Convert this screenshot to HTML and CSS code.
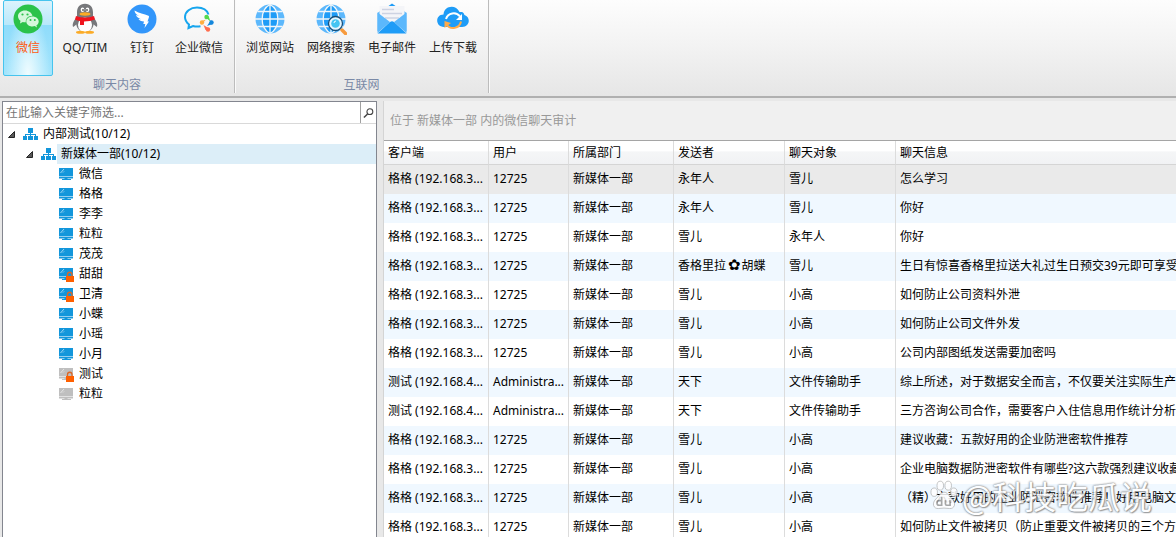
FILE: index.html
```html
<!DOCTYPE html>
<html lang="zh-CN">
<head>
<meta charset="utf-8">
<title>微信聊天审计</title>
<link rel="stylesheet" href="styles.css">
</head>
<body>
<svg class="defs" aria-hidden="true">
  <defs>
    <g id="globe">
      <circle cx="16" cy="16" r="14.5" fill="#5cb8fc"/>
      <path d="M16 1.500C5 7 5 25 16 30.500C27 25 27 7 16 1.500Z" fill="#1e9cf7"/>
      <path d="M16 1V31M1 16H31M3.500 8.500H28.500M3.500 23.500H28.500M16 1.500C5.500 7 5.500 25 16 30.500C26.500 25 26.500 7 16 1.500Z" fill="none" stroke="#f2f6f9" stroke-width="1.300"/>
    </g>
    <g id="org">
      <rect x="5" y="1" width="5" height="5"/>
      <path d="M7 5h1v2h5v3h-1V8H8v2H7V8H3v2H2V7h5z"/>
      <rect x="0" y="9" width="4" height="4"/><rect x="5" y="9" width="5" height="4"/><rect x="11" y="9" width="4" height="4"/>
    </g>
    <g id="pc">
      <path d="M0 1h14v8H0zM0 10h14v1.500H8.500V12H12v1H3v-1h2.500v-.5H0z"/>
      <path d="M0 9h14v1H0z" fill-opacity=".45"/>
      <path d="M1.500 6L5 2M4 5.500L5 4.500" stroke="#fff" stroke-opacity=".6" fill="none"/>
    </g>
    <g id="lock">
      <path d="M8.500 9.500V7.500a2.200 2.200 0 0 1 4.500 0V9.500" fill="none" stroke="#d9682a" stroke-width="1.300"/>
      <rect x="7" y="9" width="8" height="6" fill="#ff6000"/>
    </g>
    <path id="arrow" d="M6.500 1.500V7.500H.5Z" fill="#595959" stroke="#262626"/>
  </defs>
</svg>

<header class="ribbon">
  <section class="group group-chat">
    <div class="tools">
      <button class="tool active" type="button">
        <svg viewBox="0 0 32 32"><circle cx="16" cy="16" r="14.500" fill="#2bc24a"/><path d="M13 7.500C9 7.500 6 10 6 13.300c0 1.900 1 3.500 2.500 4.500L8 20.500l2.800-1.500c1 .3 2 .4 3 .3C13.300 15.500 16.500 12.700 20.500 12.800 19.700 9.800 16.700 7.500 13 7.500Z" fill="#d5f7dc"/><path d="M20.500 13.500c-3.500 0-6.200 2.200-6.200 4.900 0 2.800 2.700 5 6.200 5 .8 0 1.500-.1 2.200-.3L25 24.500l-.6-2.200c1.400-.9 2.300-2.300 2.300-3.900 0-2.700-2.700-4.900-6.200-4.900Z" fill="#d5f7dc"/><g fill="#2bc24a"><circle cx="10.500" cy="11.500" r="1.100"/><circle cx="15.500" cy="11.500" r="1.100"/><circle cx="18.500" cy="17" r="1"/><circle cx="22.800" cy="17" r="1"/></g></svg>
        <span>微信</span>
      </button>
      <button class="tool" type="button">
        <svg viewBox="0 0 32 32"><path d="M8 14C4 18 3 22 4.200 24L8 21M24 14c4 4 5 8 3.800 10L24 21" fill="#77787b"/><path d="M16 .800C10.500.800 8 4.500 8 9.500v4C6 18 6.500 29 16 29S26 18 24 13.500v-4C24 4.500 21.500.800 16 .800Z" fill="#77787b"/><ellipse cx="16" cy="22" rx="7" ry="7.500" fill="#fff"/><ellipse cx="11.500" cy="29.300" rx="4.500" ry="1.500" fill="#fbab26"/><ellipse cx="20.500" cy="29.300" rx="4.500" ry="1.500" fill="#fbab26"/><ellipse cx="13.500" cy="6.800" rx="1.800" ry="2.300" fill="#fff"/><ellipse cx="18.500" cy="6.800" rx="1.800" ry="2.300" fill="#fff"/><circle cx="14" cy="7" r=".9" fill="#555"/><circle cx="18" cy="7" r=".9" fill="#555"/><ellipse cx="16" cy="11" rx="5.500" ry="1.700" fill="#fbab26"/><path d="M7 13q9 3 18 0l1 3.500q-5 2-11 2V22h-4v-4Q8 17.500 6 16.500Z" fill="#f0141e"/></svg>
        <span>QQ/TIM</span>
      </button>
      <button class="tool" type="button">
        <svg viewBox="0 0 32 32"><circle cx="16" cy="16" r="14.500" fill="#3296fa"/><path d="M8.500 7.500C13 10 18 11 22.500 12.800c.8.400.6 1.300.2 2.200L21.500 18.500h1.500L18.500 25l.8-4h-2l.7-2.500c-3-.2-4.500-1-5.500-2.500l2.500.2C12 15 10.500 13.800 10 12l3 .8C10 11.500 8.600 9.800 8.500 7.500Z" fill="#fff"/></svg>
        <span>钉钉</span>
      </button>
      <button class="tool" type="button">
        <svg viewBox="0 0 32 32"><path d="M25.500 11.500C24 7 19.500 4.500 14 4.500 7.500 4.500 2 8.500 2 14c0 3.200 1.500 5.500 4 7.500L5.500 25l4.500-2c2.700.7 5 .7 7.500.2" fill="none" stroke="#16a5ee" stroke-width="2"/><g fill="#54d94d"><circle cx="23.500" cy="14" r="2.200"/><path d="M22 14l3.500-1 2 5.500z"/></g><g fill="#1587dc"><circle cx="28.500" cy="19.500" r="2.200"/><path d="M28 17l1.500 4-5.500 2z"/></g><g fill="#ff6d4e"><circle cx="25" cy="26.500" r="2.200"/><path d="M27 26l-4.500 1-2-5z"/></g><g fill="#ffae40"><circle cx="19" cy="19.500" r="2.200"/><path d="M18.500 21.500l-1-3 5.500-2z"/></g></svg>
        <span>企业微信</span>
      </button>
    </div>
    <h2>聊天内容</h2>
  </section>
  <section class="group group-net">
    <div class="tools">
      <button class="tool" type="button">
        <svg viewBox="0 0 32 32"><use href="#globe"/></svg>
        <span>浏览网站</span>
      </button>
      <button class="tool" type="button">
        <svg viewBox="0 0 32 32"><use href="#globe"/><circle cx="20.500" cy="20.500" r="7" fill="#e5f6ff" stroke="#184f79" stroke-width="1.300"/><circle cx="20.500" cy="20.500" r="4.300" fill="#45c5f2"/><path d="M19 20a2 2 0 0 1 2-2" stroke="#fff" fill="none"/><path d="M27 27l3.500 3.500" stroke="#f79a3c" stroke-width="3.500" stroke-linecap="round"/></svg>
        <span>网络搜索</span>
      </button>
      <button class="tool" type="button">
        <svg viewBox="0 0 32 32"><path d="M12.500 3L16 .500 19.500 3z" fill="#1e9cf7"/><path d="M1.500 10L4 8v20H1.500zM30.500 10L28 8v20h2.500z" fill="#5cb8fc"/><path d="M3.500 3h25v15H3.500z" fill="#f4f5f8"/><path d="M6 6.500h12M6 10.500h20M9 15h14" stroke="#cdd3e2" stroke-width="1.300"/><path d="M1.500 9.500L14 19 1.500 30ZM30.500 9.500L18 19l12.500 11Z" fill="#5cb8fc"/><path d="M1.500 30.500L14 19q2-1.500 4 0L30.500 30.500Z" fill="#1e9cf7"/></svg>
        <span>电子邮件</span>
      </button>
      <button class="tool" type="button">
        <svg viewBox="0 0 32 32"><path d="M7 24C-2 24-2 11.500 6.500 11.500 7 2.500 19 1 22.500 9 27 8.500 27 11 27.500 12 34 14 33 24 25 24Z" fill="#1e9cf7"/><path d="M9 16a8 8 0 0 1 14-2.500" fill="none" stroke="#fff" stroke-width="2"/><path d="M25 11v6h-6z" fill="#fff"/><path d="M24 18.500a8 8 0 0 1-14.500 3" fill="none" stroke="#ffab4a" stroke-width="2"/><path d="M7.500 25v-7l6.500 2z" fill="#ffab4a"/></svg>
        <span>上传下载</span>
      </button>
    </div>
    <h2>互联网</h2>
  </section>
</header>

<main class="workspace">
  <aside class="sidebar">
    <form class="search">
      <input type="text" aria-label="筛选" placeholder="在此输入关键字筛选...">
      <button type="button" aria-label="搜索"><svg viewBox="0 0 12 12"><circle cx="7.500" cy="4.500" r="3.200" fill="none" stroke="#444" stroke-width="1.200"/><path d="M5 7L1 11" stroke="#444" stroke-width="1.600"/></svg></button>
    </form>
    <ul class="tree">
      <li class="node root"><svg class="arrow" viewBox="0 0 8 8"><use href="#arrow"/></svg><svg class="icon" viewBox="0 0 15 15"><use href="#org"/></svg><span>内部测试(10/12)</span></li>
      <li class="node dept"><svg class="arrow" viewBox="0 0 8 8"><use href="#arrow"/></svg><svg class="icon" viewBox="0 0 15 15"><use href="#org"/></svg><span class="selected">新媒体一部(10/12)</span></li>
      <li class="node leaf"><svg class="icon" viewBox="0 0 15 15"><use href="#pc"/></svg><span>微信</span></li>
      <li class="node leaf"><svg class="icon" viewBox="0 0 15 15"><use href="#pc"/></svg><span>格格</span></li>
      <li class="node leaf"><svg class="icon" viewBox="0 0 15 15"><use href="#pc"/></svg><span>李李</span></li>
      <li class="node leaf"><svg class="icon" viewBox="0 0 15 15"><use href="#pc"/></svg><span>粒粒</span></li>
      <li class="node leaf"><svg class="icon" viewBox="0 0 15 15"><use href="#pc"/></svg><span>茂茂</span></li>
      <li class="node leaf"><svg class="icon" viewBox="0 0 15 15"><use href="#pc"/><use href="#lock"/></svg><span>甜甜</span></li>
      <li class="node leaf"><svg class="icon" viewBox="0 0 15 15"><use href="#pc"/><use href="#lock"/></svg><span>卫清</span></li>
      <li class="node leaf"><svg class="icon" viewBox="0 0 15 15"><use href="#pc"/></svg><span>小蝶</span></li>
      <li class="node leaf"><svg class="icon" viewBox="0 0 15 15"><use href="#pc"/></svg><span>小瑶</span></li>
      <li class="node leaf"><svg class="icon" viewBox="0 0 15 15"><use href="#pc"/></svg><span>小月</span></li>
      <li class="node leaf offline"><svg class="icon" viewBox="0 0 15 15"><use href="#pc"/><use href="#lock"/></svg><span>测试</span></li>
      <li class="node leaf offline"><svg class="icon" viewBox="0 0 15 15"><use href="#pc"/></svg><span>粒粒</span></li>
    </ul>
  </aside>
  <section class="content">
    <h1>位于 新媒体一部 内的微信聊天审计</h1>
    <table class="log">
      <colgroup><col class="c-client"><col class="c-user"><col class="c-dept"><col class="c-name"><col class="c-name"><col></colgroup>
      <thead><tr><th>客户端</th><th>用户</th><th>所属部门</th><th>发送者</th><th>聊天对象</th><th>聊天信息</th></tr></thead>
      <tbody>
        <tr class="current"><td>格格 (192.168.3...</td><td>12725</td><td>新媒体一部</td><td>永年人</td><td>雪儿</td><td>怎么学习</td></tr>
        <tr><td>格格 (192.168.3...</td><td>12725</td><td>新媒体一部</td><td>永年人</td><td>雪儿</td><td>你好</td></tr>
        <tr><td>格格 (192.168.3...</td><td>12725</td><td>新媒体一部</td><td>雪儿</td><td>永年人</td><td>你好</td></tr>
        <tr><td>格格 (192.168.3...</td><td>12725</td><td>新媒体一部</td><td>香格里拉<span class="flower">✿</span>胡蝶</td><td>雪儿</td><td>生日有惊喜香格里拉送大礼过生日预交39元即可享受</td></tr>
        <tr><td>格格 (192.168.3...</td><td>12725</td><td>新媒体一部</td><td>雪儿</td><td>小高</td><td>如何防止公司资料外泄</td></tr>
        <tr><td>格格 (192.168.3...</td><td>12725</td><td>新媒体一部</td><td>雪儿</td><td>小高</td><td>如何防止公司文件外发</td></tr>
        <tr><td>格格 (192.168.3...</td><td>12725</td><td>新媒体一部</td><td>雪儿</td><td>小高</td><td>公司内部图纸发送需要加密吗</td></tr>
        <tr><td>测试 (192.168.4...</td><td>Administra...</td><td>新媒体一部</td><td>天下</td><td>文件传输助手</td><td>综上所述，对于数据安全而言，不仅要关注实际生产</td></tr>
        <tr><td>测试 (192.168.4...</td><td>Administra...</td><td>新媒体一部</td><td>天下</td><td>文件传输助手</td><td>三方咨询公司合作，需要客户入住信息用作统计分析</td></tr>
        <tr><td>格格 (192.168.3...</td><td>12725</td><td>新媒体一部</td><td>雪儿</td><td>小高</td><td>建议收藏：五款好用的企业防泄密软件推荐</td></tr>
        <tr><td>格格 (192.168.3...</td><td>12725</td><td>新媒体一部</td><td>雪儿</td><td>小高</td><td>企业电脑数据防泄密软件有哪些?这六款强烈建议收藏</td></tr>
        <tr><td>格格 (192.168.3...</td><td>12725</td><td>新媒体一部</td><td>雪儿</td><td>小高</td><td>（精）六款好用的企业防泄密软件推荐！好用电脑文</td></tr>
        <tr><td>格格 (192.168.3...</td><td>12725</td><td>新媒体一部</td><td>雪儿</td><td>小高</td><td>如何防止文件被拷贝（防止重要文件被拷贝的三个方</td></tr>
      </tbody>
    </table>
  </section>
</main>
<div class="watermark">
  <svg viewBox="0 0 30 32"><g fill="#fff" stroke="#999" stroke-width=".7"><ellipse cx="4.500" cy="13" rx="3.500" ry="4.500"/><ellipse cx="11" cy="6" rx="3.500" ry="4.800"/><ellipse cx="19.500" cy="6" rx="3.500" ry="4.800"/><ellipse cx="25.500" cy="13" rx="3.500" ry="4.500"/><path d="M15 13c-4 0-5 4-8 6.500C1 25 4 31 9 30.500q6-1 12 0c5 .5 8-5.500 2-11C20 17 19 13 15 13Z"/></g><path d="M12.500 18v9H9.500q-2 0-2-2.500t2-2.500h3M16.500 21.500v4q0 1.500 1.500 1.500h3.500v-5.500" fill="none" stroke="#999" stroke-width="1.800"/></svg>
  <span>@科技吃瓜说</span>
</div>
</body>
</html>
```
FILE: styles.css
```css
* { box-sizing: border-box; }

body {
  position: relative;
  display: flex;
  flex-direction: column;
  height: 100vh;
  margin: 0;
  overflow: hidden;
  background: #e8e8e8;
  color: #000;
  font: 12px/20px "Noto Sans", "Noto Sans CJK SC", sans-serif;
}

button, input { font: inherit; }
h1, h2 { margin: 0; font-size: 12px; font-weight: 400; }
svg { display: block; }
.defs { position: absolute; width: 0; height: 0; }

/* Ribbon */
.ribbon {
  display: flex;
  flex: none;
  height: 98px;
  padding-bottom: 3px;
  background: linear-gradient(#fdfdfd, #f2f2f2 50%, #e6e6e6);
  border-bottom: 2px solid #b0b0b0;
}
.group {
  display: flex;
  flex-direction: column;
  border-right: 1px solid #bcbcbc;
  box-shadow: 1px 0 #fafafa;
}
.tools { display: flex; }
.group-chat .tools { gap: 7px; padding: 0 10px 0 3px; }
.group-net .tools { gap: 11px; padding: 0 10px; }
.group h2 { color: #7a89a6; text-align: center; line-height: 18px; }
.tool {
  display: flex;
  flex-direction: column;
  align-items: center;
  width: 50px;
  height: 76px;
  padding: 2px 0 0;
  border: 1px solid transparent;
  border-radius: 2px;
  background: none;
  color: #222;
  white-space: nowrap;
}
.tool svg { width: 32px; height: 32px; }
.tool span { line-height: 26px; }
.tool.active {
  border-color: #46c4ee;
  background: radial-gradient(ellipse at 50% 100%, #f0fcff, transparent 65%), linear-gradient(#dcf3fc, #b8e8fb 32%, #8fdcfb 33%, #a5e5fc);
  color: #ff5a10;
}

/* Workspace */
.workspace {
  display: flex;
  flex: 1;
  gap: 6px;
  min-height: 0;
  padding: 3px 0 0 2px;
}
.sidebar {
  flex: 0 0 375px;
  border: 1px solid #83868f;
  border-bottom: 0;
  background: #fff;
}
.search {
  display: flex;
  height: 22px;
  border-bottom: 1px solid #d9d9d9;
}
.search input {
  flex: 1;
  min-width: 0;
  padding: 0 3px;
  border: 0;
  outline: 0;
}
.search input::placeholder { color: #757575; opacity: 1; }
.search button {
  width: 16px;
  padding: 0 2px;
  border: 0;
  border-left: 1px solid #a0a0a0;
  background: #fff;
}
.search svg { width: 11px; height: 12px; }

.tree { margin: 0; padding: 0; list-style: none; }
.node { display: flex; align-items: center; height: 20px; }
.node.root { padding-left: 5px; }
.node.dept { padding-left: 23px; }
.node.leaf { padding-left: 56px; }
.arrow { width: 8px; height: 8px; margin-right: 7px; }
.icon { width: 15px; height: 15px; margin-right: 1px; fill: #1296db; }
.offline .icon { fill: #bfbfbf; }
.node span { flex: 1; padding-left: 4px; }
.node .selected { background: #dceef8; }

/* Chat log */
.content {
  flex: 1;
  min-width: 0;
  overflow: hidden;
  border-left: 1px solid #d4d4d4;
  background: #fff;
}
.content h1 {
  padding: 0 6px;
  border-bottom: 1px solid #a5a5a5;
  background: #f0f0f0;
  color: #999;
  line-height: 39px;
}
.log {
  width: 100%;
  border-collapse: separate;
  border-spacing: 0;
  table-layout: fixed;
}
.c-client, .c-dept { width: 105px; }
.c-user { width: 80px; }
.c-name { width: 111px; }
.log th, .log td {
  height: 29px;
  padding: 0 0 2px 4px;
  overflow: hidden;
  border-right: 1px solid #dcdcdc;
  font-weight: 400;
  text-align: left;
  white-space: nowrap;
}
.log th {
  height: 24px;
  padding-bottom: 0;
  border-bottom: 1px solid #d5d5d5;
  background: linear-gradient(#fff 45%, #f5f6f7 46%, #f1f2f4);
}
.log th:last-child, .log td:last-child { border-right: 0; }
.log tbody tr:nth-child(even) { background: #f0f8ff; }
.log tbody .current { background: #eaeaea; }
.flower { padding: 0 1px 0 2px; font-family: "DejaVu Sans", sans-serif; font-size: 15px; line-height: 12px; }

/* Watermark floats over the log */
.watermark {
  position: absolute;
  right: 24px;
  bottom: 22px;
  display: flex;
  align-items: center;
  gap: 4px;
  color: #fff;
  font: 32px/40px "Noto Sans CJK SC", sans-serif;
  text-shadow: 0 0 2px #777, 0 0 2px #888, 1px 1px 1px #999;
  opacity: .85;
  pointer-events: none;
}
.watermark svg { width: 28px; height: 32px; }
```
